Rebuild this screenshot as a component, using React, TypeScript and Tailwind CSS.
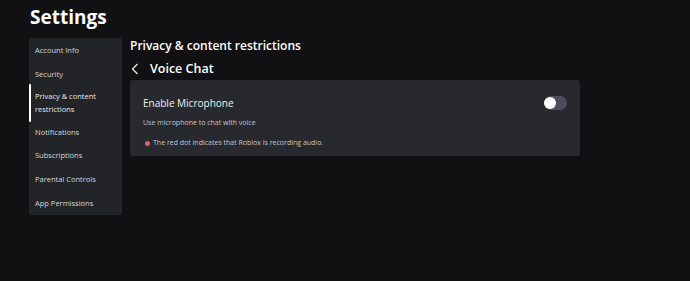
const navItems = [
  "Account Info",
  "Security",
  "Privacy & content restrictions",
  "Notifications",
  "Subscriptions",
  "Parental Controls",
  "App Permissions",
];

const App = () => {
  const active = "Privacy & content restrictions";

  return (
    <div
      className="w-[690px] h-[281px] bg-[#111113] text-[#ececee] overflow-hidden pl-[29px]"
      style={{ fontFamily: '"Open Sans", "Liberation Sans", sans-serif' }}
    >
      <h1 className="pt-[4px] h-[38px] pl-px text-[19px] leading-[26px] font-bold text-white">Settings</h1>
      <div className="flex gap-2">
        <nav className="w-[93px] h-[177px] pt-px bg-[#232428] rounded-[2px] flex flex-col">
          {navItems.map((item) => {
            const isActive = item === active;
            return (
              <div
                key={item}
                className={
                  isActive
                    ? "relative h-[35px] flex items-center pl-[6px] pr-2 text-[7.5px] leading-[13px] text-[#e6e6e8]"
                    : "h-6 flex items-center pl-[6px] text-[7.5px] leading-[13px] text-[#d6d6da]"
                }
              >
                {isActive && <span className="absolute left-0 -top-[2px] -bottom-px w-[2px] rounded-full bg-white" />}
                <span className={isActive ? "w-[76px]" : ""}>{item}</span>
              </div>
            );
          })}
        </nav>
        <main className="w-[450px]">
          <h2 className="text-[12px] leading-4 font-semibold text-white">Privacy &amp; content restrictions</h2>
          <div className="flex items-center h-[22px] mt-1">
            <svg width="8" height="12" viewBox="0 0 8 12" className="ml-[1px]">
              <path d="M6.5 1 L1.5 6 L6.5 11" fill="none" stroke="#e6e6e8" strokeWidth="1.3" />
            </svg>
            <span className="ml-[11px] text-[12.5px] font-semibold text-white">Voice Chat</span>
          </div>
          <section className="bg-[#28292e] rounded-[3px] pl-[13px] pr-[13px] pt-[16px] pb-[8px]">
            <div className="flex items-center justify-between h-[14px]">
              <span className="text-[10px] leading-[14px] text-[#f0f0f2]">Enable Microphone</span>
              <button className="w-[23px] h-[14px] rounded-full bg-[#4b4d5a] flex items-center">
                <span className="w-[12px] h-[12px] rounded-full bg-white" />
              </button>
            </div>
            <p className="mt-[8px] text-[7px] leading-[10px] text-[#c4c5ca]">Use microphone to chat with voice</p>
            <p className="mt-[10px] flex items-center text-[7px] leading-[10px] text-[#c4c5ca]">
              <span className="ml-[2px] w-[5px] h-[5px] rounded-full bg-[#e8605f] mr-[3px]" />
              The red dot indicates that Roblox is recording audio.
            </p>
          </section>
        </main>
      </div>
    </div>
  );
};

export default App;
